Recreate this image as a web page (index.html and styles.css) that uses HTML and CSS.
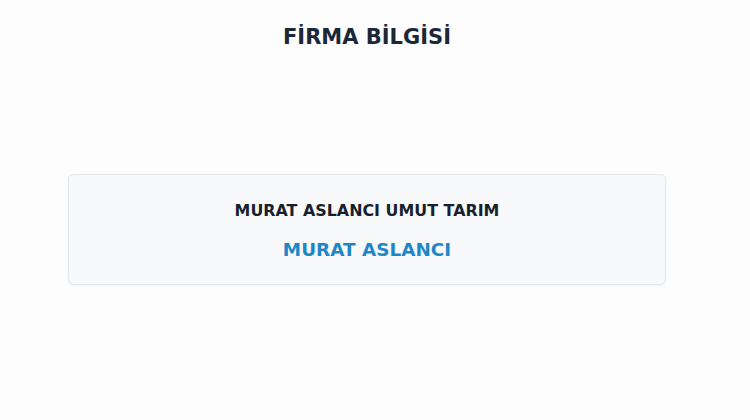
FILE: index.html
```html
<!DOCTYPE html>
<html lang="tr">
<head>
<meta charset="utf-8">
<title>Firma Bilgisi</title>
<link rel="stylesheet" href="styles.css">
</head>
<body>
<div class="page">
  <h1 class="title">FİRMA BİLGİSİ</h1>
  <div class="card">
    <div class="company">MURAT ASLANCI UMUT TARIM</div>
    <div class="owner">MURAT ASLANCI</div>
  </div>
</div>
</body>
</html>
```

FILE: styles.css
```css
html, body {
  margin: 0;
  padding: 0;
  background: #fdfdfd;
}
body {
  font-family: "DejaVu Sans", "Noto Sans", sans-serif;
  width: 734px;
  height: 420px;
  overflow: hidden;
}
.page {
  padding: 0 68px;
  display: flex;
  flex-direction: column;
}
.title {
  margin: 24px 0 0;
  height: 150px;
  font-size: 21px;
  line-height: 26px;
  font-weight: 700;
  color: #1e2738;
  text-align: center;
}
.card {
  background: #f8f9fb;
  border: 1px solid #e3e6ea;
  border-radius: 6px;
  box-shadow: 0 1px 3px rgba(0,0,0,0.05);
  height: 111px;
  display: flex;
  flex-direction: column;
  align-items: center;
  justify-content: center;
  gap: 18px;
  padding-top: 3px;
  box-sizing: border-box;
}
.company {
  font-size: 15.9px;
  line-height: 20px;
  font-weight: 700;
  color: #1a1f2c;
}
.owner {
  font-size: 18.4px;
  line-height: 22px;
  font-weight: 700;
  color: #1f87c6;
}
```
